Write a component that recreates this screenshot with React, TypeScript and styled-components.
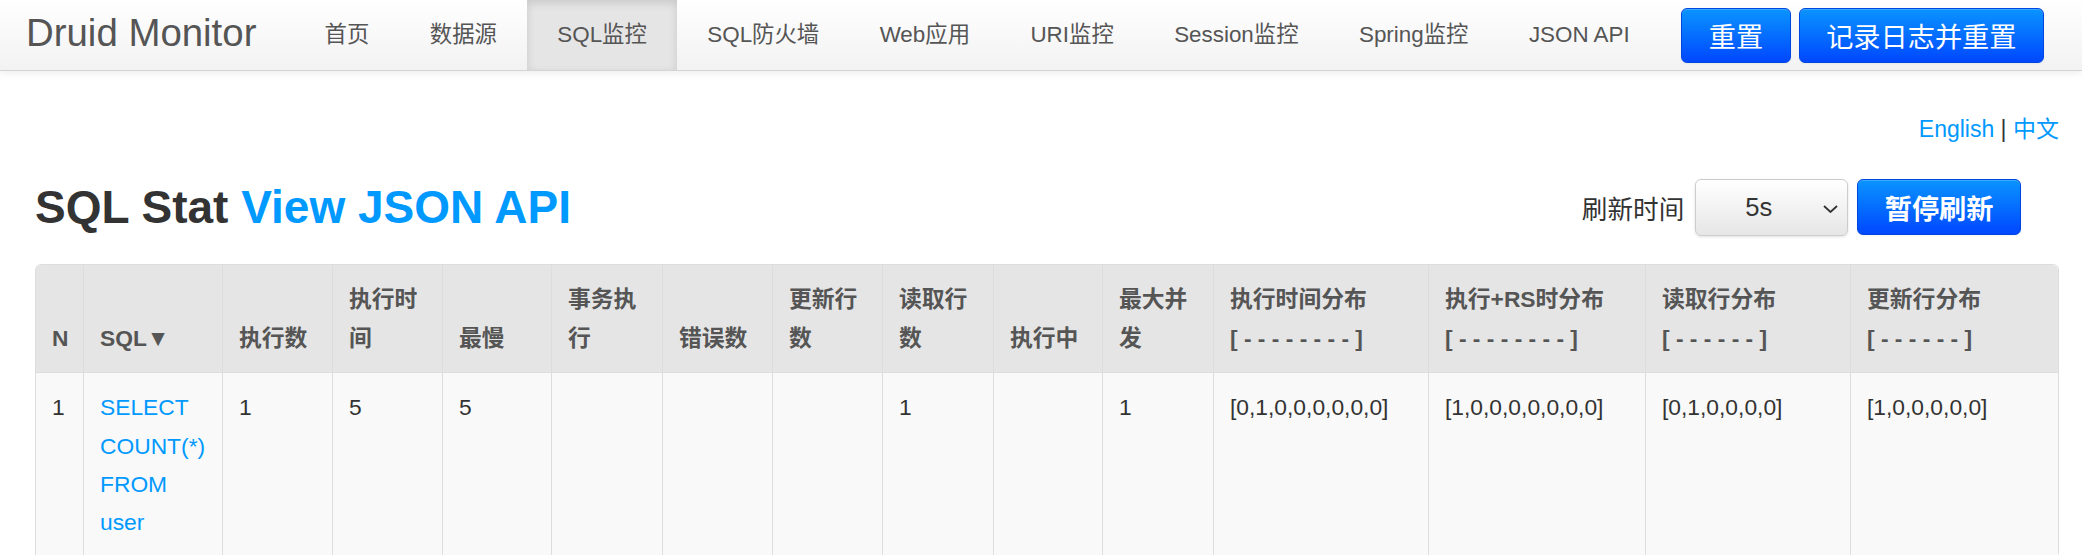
import React from "react";
import styled, { createGlobalStyle } from "styled-components";

const GlobalStyle = createGlobalStyle`
  html, body {
    margin: 0;
    padding: 0;
    overflow: hidden;
    background: #ffffff;
  }
  body {
    font-family: "Liberation Sans", Arial, "Noto Sans CJK SC", sans-serif;
    color: #333333;
  }
  * { box-sizing: border-box; }
`;

const Navbar = styled.header`
  display: flex;
  align-items: center;
  height: 71px;
  padding: 0 38px 0 26px;
  background: linear-gradient(to bottom, #ffffff, #f2f2f2);
  border-bottom: 1px solid #d4d4d4;
  box-shadow: 0 2px 8px rgba(0, 0, 0, 0.08);
`;

const Brand = styled.a`
  font-size: 38.4px;
  line-height: 1;
  color: #555555;
  text-decoration: none;
  margin: 0 38px 3px 0;
  white-space: nowrap;
`;

const NavList = styled.nav`
  display: flex;
  align-self: stretch;
`;

const NavLink = styled.a<{ $active?: boolean }>`
  display: block;
  height: 70px;
  line-height: 70px;
  padding: 0 30.2px;
  font-size: 22.4px;
  color: #555555;
  text-decoration: none;
  white-space: nowrap;
  background: ${(p) => (p.$active ? "#e5e5e5" : "transparent")};
  box-shadow: ${(p) => (p.$active ? "inset 0 3px 8px rgba(0,0,0,0.125)" : "none")};
`;

const NavActions = styled.div`
  display: flex;
  gap: 8px;
  margin-left: auto;
`;

const PrimaryButton = styled.button<{ $bold?: boolean; $height: number }>`
  height: ${(p) => p.$height}px;
  padding: 0 26.5px;
  font-family: inherit;
  font-size: 27.2px;
  font-weight: ${(p) => (p.$bold ? "bold" : "normal")};
  color: #ffffff;
  border: 1px solid #0046e0;
  border-radius: 6px;
  background: linear-gradient(to bottom, #0a94ff, #0047ff);
  box-shadow: inset 0 1px 0 rgba(255, 255, 255, 0.2), 0 1px 2px rgba(0, 0, 0, 0.05);
  white-space: nowrap;
  cursor: pointer;
`;

const Main = styled.main`
  padding: 39px 23px 0 35px;
`;

const LangBar = styled.div`
  text-align: right;
  font-size: 23px;
  line-height: 38.4px;
  color: #333333;
`;

const TextLink = styled.a`
  color: #0099ff;
  text-decoration: none;
`;

const HeaderRow = styled.div`
  display: flex;
  align-items: center;
  justify-content: space-between;
  height: 58px;
  margin: 30px 0 28px;
`;

const Title = styled.h1`
  margin: 0;
  font-size: 46px;
  line-height: 58px;
  font-weight: bold;
  color: #333333;
`;

const Controls = styled.div`
  display: flex;
  align-items: center;
  margin-right: 38px;
`;

const ControlLabel = styled.span`
  font-size: 25.6px;
  color: #333333;
  margin-right: 11px;
`;

const SelectWrap = styled.div`
  position: relative;
  width: 153px;
  height: 57px;
  margin-right: 9px;
`;

const Select = styled.select`
  appearance: none;
  width: 100%;
  height: 100%;
  padding: 0 26px 0 0;
  font-family: inherit;
  font-size: 25.6px;
  color: #333333;
  text-align: center;
  text-align-last: center;
  border: 1px solid #cccccc;
  border-radius: 6px;
  background: linear-gradient(to bottom, #ffffff, #e6e6e6);
  box-shadow: 0 1px 3px rgba(0, 0, 0, 0.12);
`;

const Chevron = styled.svg`
  position: absolute;
  right: 10px;
  top: 26px;
  width: 15px;
  height: 8px;
  pointer-events: none;
`;

const Table = styled.table`
  width: 100%;
  table-layout: fixed;
  border-collapse: separate;
  border-spacing: 0;
  border: 1px solid #dddddd;
  border-left: 0;
  border-radius: 6px;
  font-size: 22.8px;
  line-height: 38.4px;
`;

const Col = styled.col<{ $w: number }>`
  width: ${(p) => p.$w}px;
`;

const Th = styled.th`
  padding: 15px 16px;
  text-align: left;
  vertical-align: bottom;
  font-weight: bold;
  color: #555555;
  background: #e5e5e5;
  border-left: 1px solid #dddddd;
  &:first-child { border-top-left-radius: 6px; }
  &:last-child { border-top-right-radius: 6px; }
`;

const Td = styled.td`
  padding: 15px 16px;
  vertical-align: top;
  color: #333333;
  background: #f9f9f9;
  border-top: 1px solid #dddddd;
  border-left: 1px solid #dddddd;
`;

const navItems = [
  "首页",
  "数据源",
  "SQL监控",
  "SQL防火墙",
  "Web应用",
  "URI监控",
  "Session监控",
  "Spring监控",
  "JSON API",
];

const DASH8 = "[ - - - - - - - - ]";
const DASH6 = "[ - - - - - - ]";

const columns: { label: string; sub?: string; w: number }[] = [
  { label: "N", w: 48 },
  { label: "SQL▼", w: 139 },
  { label: "执行数", w: 110 },
  { label: "执行时间", w: 110 },
  { label: "最慢", w: 109 },
  { label: "事务执行", w: 111 },
  { label: "错误数", w: 110 },
  { label: "更新行数", w: 110 },
  { label: "读取行数", w: 111 },
  { label: "执行中", w: 109 },
  { label: "最大并发", w: 111 },
  { label: "执行时间分布", sub: DASH8, w: 215 },
  { label: "执行+RS时分布", sub: DASH8, w: 217 },
  { label: "读取行分布", sub: DASH6, w: 205 },
  { label: "更新行分布", sub: DASH6, w: 208 },
];

const row: (string | null)[] = [
  "1",
  null,
  "1",
  "5",
  "5",
  "",
  "",
  "",
  "1",
  "",
  "1",
  "[0,1,0,0,0,0,0,0]",
  "[1,0,0,0,0,0,0,0]",
  "[0,1,0,0,0,0]",
  "[1,0,0,0,0,0]",
];

export default function App() {
  return (
    <>
      <GlobalStyle />
      <Navbar>
        <Brand href="#">Druid Monitor</Brand>
        <NavList>
          {navItems.map((item) => (
            <NavLink key={item} href="#" $active={item === "SQL监控"}>
              {item}
            </NavLink>
          ))}
        </NavList>
        <NavActions>
          <PrimaryButton $height={55}>重置</PrimaryButton>
          <PrimaryButton $height={55}>记录日志并重置</PrimaryButton>
        </NavActions>
      </Navbar>
      <Main>
        <LangBar>
          <TextLink href="#">English</TextLink> | <TextLink href="#">中文</TextLink>
        </LangBar>
        <HeaderRow>
          <Title>
            SQL Stat <TextLink href="#">View JSON API</TextLink>
          </Title>
          <Controls>
            <ControlLabel>刷新时间</ControlLabel>
            <SelectWrap>
              <Select defaultValue="5">
                <option value="5">5s</option>
                <option value="10">10s</option>
                <option value="20">20s</option>
                <option value="30">30s</option>
                <option value="60">60s</option>
              </Select>
              <Chevron viewBox="0 0 15 8">
                <path d="M1 1 L7.5 7 L14 1" fill="none" stroke="#333" strokeWidth="1.8" />
              </Chevron>
            </SelectWrap>
            <PrimaryButton $bold $height={56}>暂停刷新</PrimaryButton>
          </Controls>
        </HeaderRow>
        <Table>
          <colgroup>
            {columns.map((c) => (
              <Col key={c.label} $w={c.w} />
            ))}
          </colgroup>
          <thead>
            <tr>
              {columns.map((c) => (
                <Th key={c.label}>
                  {c.label}
                  {c.sub && (
                    <>
                      <br />
                      {c.sub}
                    </>
                  )}
                </Th>
              ))}
            </tr>
          </thead>
          <tbody>
            <tr>
              {row.map((v, i) => (
                <Td key={i}>
                  {v === null ? <TextLink href="#">SELECT COUNT(*) FROM user</TextLink> : v}
                </Td>
              ))}
            </tr>
          </tbody>
        </Table>
      </Main>
    </>
  );
}
